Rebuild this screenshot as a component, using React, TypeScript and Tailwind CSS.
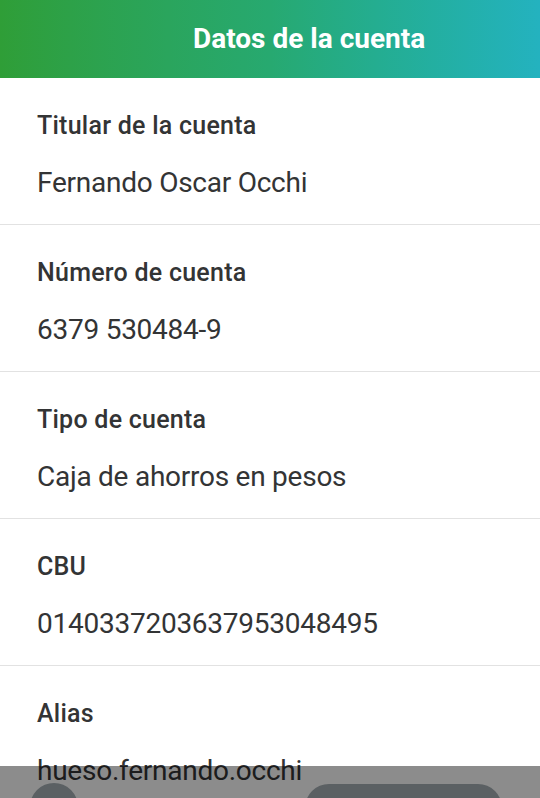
const rows = [
  { label: 'Titular de la cuenta', value: 'Fernando Oscar Occhi' },
  { label: 'Número de cuenta', value: '6379 530484-9' },
  { label: 'Tipo de cuenta', value: 'Caja de ahorros en pesos' },
  { label: 'CBU', value: '0140337203637953048495' },
  { label: 'Alias', value: 'hueso.fernando.occhi' },
];

export default function App() {
  return (
    <div
      className="relative h-[798px] w-[540px] overflow-hidden bg-white text-[#333435]"
      style={{ fontFamily: 'Roboto, "Noto Sans", sans-serif' }}
    >
      {/* header */}
      <div className="flex h-[78px] items-center bg-gradient-to-r from-[#2f9e37] via-[#27a970] to-[#24b2bf] pl-[193px]">
        <h1 className="text-[28px] font-bold text-white">Datos de la cuenta</h1>
      </div>

      {/* account rows */}
      <div className="flex flex-col">
        {rows.map((row) => (
          <div key={row.label} className="flex flex-col border-b border-[#e2e2e2] px-[37px] pb-[24px] pt-[32px]">
            <div className="text-[25px] font-medium leading-[32px] tracking-[0.25px]">{row.label}</div>
            <div className="mt-[24px] text-[28px] leading-[34px] tracking-[-0.25px]">{row.value}</div>
          </div>
        ))}
      </div>

      {/* dimmed bottom bar */}
      <div className="absolute inset-x-0 bottom-0 h-[32px] bg-black/45">
        <div className="absolute left-[30px] top-[17px] h-[48px] w-[48px] rounded-full bg-[#5b6063]" />
        <div className="absolute left-[305px] top-[18px] h-[48px] w-[197px] rounded-[24px] bg-[#5b6063]" />
      </div>
    </div>
  );
}
